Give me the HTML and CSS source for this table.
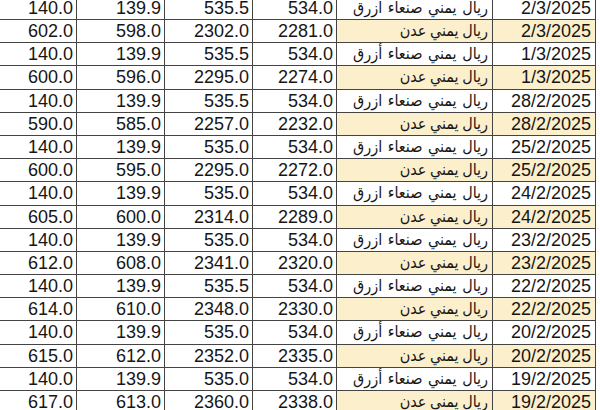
FILE: index.html
```html
<!DOCTYPE html>
<html lang="ar">
<head>
<meta charset="utf-8">
<link rel="stylesheet" href="styles.css">
</head>
<body>
<div class="sheet">
  <div class="grid">
    <div class="c">140.0</div><div class="c">139.9</div><div class="c">535.5</div><div class="c">534.0</div><div class="c ar">ريال يمني صنعاء ازرق</div><div class="c dt">2/3/2025</div>
    <div class="c">602.0</div><div class="c">598.0</div><div class="c">2302.0</div><div class="c">2281.0</div><div class="c ar y">ريال يمني عدن</div><div class="c dt y">2/3/2025</div>
    <div class="c">140.0</div><div class="c">139.9</div><div class="c">535.5</div><div class="c">534.0</div><div class="c ar">ريال يمني صنعاء أزرق</div><div class="c dt">1/3/2025</div>
    <div class="c">600.0</div><div class="c">596.0</div><div class="c">2295.0</div><div class="c">2274.0</div><div class="c ar y">ريال يمني عدن</div><div class="c dt y">1/3/2025</div>
    <div class="c">140.0</div><div class="c">139.9</div><div class="c">535.5</div><div class="c">534.0</div><div class="c ar">ريال يمني صنعاء ازرق</div><div class="c dt">28/2/2025</div>
    <div class="c">590.0</div><div class="c">585.0</div><div class="c">2257.0</div><div class="c">2232.0</div><div class="c ar y">ريال يمني عدن</div><div class="c dt y">28/2/2025</div>
    <div class="c">140.0</div><div class="c">139.9</div><div class="c">535.0</div><div class="c">534.0</div><div class="c ar">ريال يمني صنعاء ازرق</div><div class="c dt">25/2/2025</div>
    <div class="c">600.0</div><div class="c">595.0</div><div class="c">2295.0</div><div class="c">2272.0</div><div class="c ar y">ريال يمني عدن</div><div class="c dt y">25/2/2025</div>
    <div class="c">140.0</div><div class="c">139.9</div><div class="c">535.0</div><div class="c">534.0</div><div class="c ar">ريال يمني صنعاء ازرق</div><div class="c dt">24/2/2025</div>
    <div class="c">605.0</div><div class="c">600.0</div><div class="c">2314.0</div><div class="c">2289.0</div><div class="c ar y">ريال يمني عدن</div><div class="c dt y">24/2/2025</div>
    <div class="c">140.0</div><div class="c">139.9</div><div class="c">535.0</div><div class="c">534.0</div><div class="c ar">ريال يمني صنعاء ازرق</div><div class="c dt">23/2/2025</div>
    <div class="c">612.0</div><div class="c">608.0</div><div class="c">2341.0</div><div class="c">2320.0</div><div class="c ar y">ريال يمني عدن</div><div class="c dt y">23/2/2025</div>
    <div class="c">140.0</div><div class="c">139.9</div><div class="c">535.5</div><div class="c">534.0</div><div class="c ar">ريال يمني صنعاء ازرق</div><div class="c dt">22/2/2025</div>
    <div class="c">614.0</div><div class="c">610.0</div><div class="c">2348.0</div><div class="c">2330.0</div><div class="c ar y">ريال يمني عدن</div><div class="c dt y">22/2/2025</div>
    <div class="c">140.0</div><div class="c">139.9</div><div class="c">535.0</div><div class="c">534.0</div><div class="c ar">ريال يمني صنعاء أزرق</div><div class="c dt">20/2/2025</div>
    <div class="c">615.0</div><div class="c">612.0</div><div class="c">2352.0</div><div class="c">2335.0</div><div class="c ar y">ريال يمني عدن</div><div class="c dt y">20/2/2025</div>
    <div class="c">140.0</div><div class="c">139.9</div><div class="c">535.0</div><div class="c">534.0</div><div class="c ar">ريال يمني صنعاء أزرق</div><div class="c dt">19/2/2025</div>
    <div class="c">617.0</div><div class="c">613.0</div><div class="c">2360.0</div><div class="c">2338.0</div><div class="c ar y">ريال يمني عدن</div><div class="c dt y">19/2/2025</div>
  </div>
</div>
</body>
</html>
```

FILE: styles.css
```css
html, body {
  margin: 0;
  padding: 0;
  background: #ffffff;
  overflow: hidden;
}
.sheet {
  width: 600px;
  height: 410px;
  overflow: hidden;
}
.grid {
  display: grid;
  grid-template-columns: 100px 87px 87px 83px 155px 102px;
  grid-auto-rows: 22.2px;
  gap: 1px;
  background: #444444;
  border-right: 1px solid #444444;
  width: max-content;
  margin-top: -3.2px;
  margin-left: -24px;
}
.c {
  background: #ffffff;
  color: #161616;
  font-family: "Liberation Sans", Arial, sans-serif;
  font-size: 18px;
  line-height: 22px;
  text-align: right;
  padding-right: 3px;
  white-space: nowrap;
  overflow: hidden;
}
.ar {
  font-family: "DejaVu Sans Condensed", "DejaVu Sans", sans-serif;
  font-size: 16px;
  direction: rtl;
  text-align: right;
  padding-right: 4px;
  word-spacing: 1px;
}
.ar.y {
  word-spacing: -1px;
}
.dt {
  padding-right: 4px;
}
.y {
  background: #fcefcb;
}
```
